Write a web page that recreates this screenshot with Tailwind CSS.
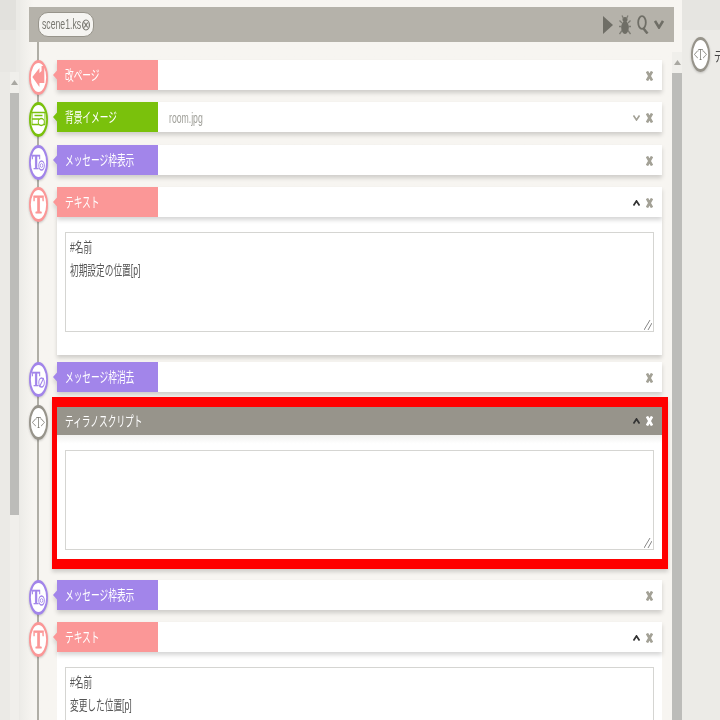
<!DOCTYPE html>
<html lang="ja">
<head>
    <meta charset="UTF-8">
    <title>scene1.ks</title>
    <script src="https://cdn.jsdelivr.net/npm/@tailwindcss/browser@4"></script>
</head>
<body class="flex h-[720px] w-[720px] overflow-hidden bg-[#ecebe7] font-['Liberation_Sans','Noto_Sans_CJK_JP',sans-serif] text-[14px]">

    <!-- left panel -->
    <div class="flex w-[20px] shrink-0 flex-col bg-[#ebeae6]">
        <div class="h-[30px] w-[16px] bg-[#e2e1dd]"></div>
        <div class="h-[42px] w-[16px] bg-[#e8e7e3]"></div>
        <div class="ml-[10px] flex h-[21px] w-[9px] items-center justify-center bg-[#f0efeb]">
            <svg width="7" height="5" viewBox="0 0 7 5"><path d="M3.5 0 7 5H0z" fill="#a9a8a2"/></svg>
        </div>
        <div class="ml-[10px] h-[422px] w-[9px] bg-[#bcbcb9]"></div>
        <div class="ml-[10px] h-[205px] w-[9px] bg-[#f0efeb]"></div>
    </div>

    <!-- main panel -->
    <div class="flex w-[662px] shrink-0 flex-col bg-linear-to-r from-[#edece8] to-[#f7f5f1] to-[2%] pt-[7px]">
        <!-- toolbar -->
        <div class="ml-[9px] mr-[8px] flex h-[35px] shrink-0 items-center bg-[#b5b2aa]">
            <div class="ml-[9px] flex h-[25px] w-[56px] items-center rounded-[10px] border border-[#97948b] bg-[#f5f4f1] pl-[3px] text-[#77766f]">
                <span class="inline-block w-[38px] origin-left scale-x-[0.62] whitespace-nowrap">scene1.ks</span>
                <svg class="ml-[2px]" width="8" height="12" viewBox="0 0 8 12"><ellipse cx="4" cy="6" rx="3.400" ry="5" fill="none" stroke="#77766f" stroke-width="1.200"/><path d="M2.300 3.500 5.700 8.500M5.700 3.500 2.300 8.500" stroke="#77766f" stroke-width="1.200"/></svg>
            </div>
            <div class="ml-auto mr-[10px] flex items-center gap-[6px]">
                <svg width="10" height="18" viewBox="0 0 10 18"><path d="M0 0 10 9 0 18z" fill="#6f6e66"/></svg>
                <svg width="12" height="20" viewBox="0 0 12 20" fill="#6f6e66"><ellipse cx="6" cy="12.500" rx="3.800" ry="6.500"/><circle cx="6" cy="4.500" r="2.500"/><path d="M3 .5 4.500 3.500M9 .5 7.500 3.500M.5 5.500 3 8M11.500 5.500 9 8M0 11.500H3M12 11.500H9M.5 19 3 15.500M11.500 19 9 15.500" stroke="#7c7b73" stroke-width="1.300" fill="none"/></svg>
                <svg width="12" height="19" viewBox="0 0 12 19" fill="none" stroke="#6f6e66"><ellipse cx="5" cy="7.500" rx="3.800" ry="6.300" stroke-width="1.800"/><path d="M6.500 13.500 10.500 18.500" stroke-width="2.500"/></svg>
                <svg class="ml-[-1px]" width="10" height="9" viewBox="0 0 10 9" fill="none" stroke="#6f6e66" stroke-width="2.600"><path d="M1 1 5 7.500 9 1"/></svg>
            </div>
        </div>

        <div class="flex min-h-0 flex-1">
            <!-- timeline -->
            <div class="relative w-[652px] shrink-0 overflow-hidden pt-[18px]">
                <div class="absolute bottom-0 left-[17px] top-0 w-[2px] bg-[#b0aea6]"></div>

                <!-- 改ページ -->
                <div class="relative mb-[7px] ml-[9px] flex items-start">
                    <svg class="mr-[5px] shrink-0 drop-shadow-[0_1px_1px_rgba(0,0,0,0.2)]" width="19" height="35" viewBox="0 0 31 35" preserveAspectRatio="none"><ellipse cx="15.500" cy="17.500" rx="14" ry="16" fill="#fff" stroke="#fb9797" stroke-width="3"/><path d="M5.500 17 17 8V13L20.500 11V6H25V23H17V27Z" fill="#fb9797"/></svg>
                    <div class="flex h-[30px] w-[609px] drop-shadow-[0_3px_2px_rgba(0,0,0,0.16)]">
                        <div class="flex h-[30px] w-[105px] items-center bg-[#fb9797] pl-[12px] text-white [clip-path:polygon(0_50%,4px_35%,4px_0,100%_0,100%_100%,4px_100%,4px_65%)]">
                            <span class="inline-block origin-left scale-x-[0.62] whitespace-nowrap">改ページ</span>
                        </div>
                        <div class="flex flex-1 items-center justify-end bg-white pr-[9px] pt-[2px]">
                            <svg width="7" height="10" viewBox="0 0 7 10" fill="none" stroke="#a3a196" stroke-width="2.600"><path d="M1 .5 6 9.500M6 .5 1 9.500"/></svg>
                        </div>
                    </div>
                </div>

                <!-- 背景イメージ -->
                <div class="relative mb-[8px] ml-[9px] flex items-start">
                    <svg class="mr-[5px] shrink-0 drop-shadow-[0_1px_1px_rgba(0,0,0,0.2)]" width="19" height="35" viewBox="0 0 31 35" preserveAspectRatio="none"><ellipse cx="15.500" cy="17.500" rx="14" ry="16" fill="#fff" stroke="#7ac10c" stroke-width="3"/><rect x="5" y="10.500" width="21" height="12" fill="none" stroke="#7ac10c" stroke-width="1.500"/><path d="M5 17H16V22M9 13.500H22" stroke="#7ac10c" stroke-width="1.500" fill="none"/><ellipse cx="20" cy="20" rx="5" ry="3.500" fill="#fff" stroke="#7ac10c" stroke-width="1.500"/></svg>
                    <div class="flex h-[30px] w-[609px] drop-shadow-[0_3px_2px_rgba(0,0,0,0.16)]">
                        <div class="flex h-[30px] w-[105px] items-center bg-[#7ac10c] pl-[12px] text-white [clip-path:polygon(0_50%,4px_35%,4px_0,100%_0,100%_100%,4px_100%,4px_65%)]">
                            <span class="inline-block origin-left scale-x-[0.62] whitespace-nowrap">背景イメージ</span>
                        </div>
                        <div class="flex flex-1 items-center bg-white pl-[11px] pr-[9px] pt-[2px]">
                            <span class="inline-block w-[32px] origin-left scale-x-[0.62] whitespace-nowrap text-[#a0a09a]">room.jpg</span>
                            <svg class="ml-auto mr-[6px]" width="7" height="6" viewBox="0 0 7 6" fill="none" stroke="#a3a196" stroke-width="1.600"><path d="M.5 .5 3.500 5 6.500 .5"/></svg>
                            <svg width="7" height="10" viewBox="0 0 7 10" fill="none" stroke="#a3a196" stroke-width="2.600"><path d="M1 .5 6 9.500M6 .5 1 9.500"/></svg>
                        </div>
                    </div>
                </div>

                <!-- メッセージ枠表示 -->
                <div class="relative mb-[7px] ml-[9px] flex items-start">
                    <svg class="mr-[5px] shrink-0 drop-shadow-[0_1px_1px_rgba(0,0,0,0.2)]" width="19" height="35" viewBox="0 0 31 35" preserveAspectRatio="none"><ellipse cx="15.500" cy="17.500" rx="14" ry="16" fill="#fff" stroke="#a285ea" stroke-width="3"/><text x="5" y="24" font-family="Liberation Serif" font-weight="700" font-size="20" fill="#a285ea" stroke="#a285ea" stroke-width=".6">T</text><circle cx="20.500" cy="20.500" r="4.500" fill="none" stroke="#a285ea" stroke-width="1.500"/><circle cx="20.500" cy="20.500" r="2" fill="none" stroke="#a285ea" stroke-width="1"/></svg>
                    <div class="flex h-[30px] w-[609px] drop-shadow-[0_3px_2px_rgba(0,0,0,0.16)]">
                        <div class="flex h-[30px] w-[105px] items-center bg-[#a285ea] pl-[12px] text-white [clip-path:polygon(0_50%,4px_35%,4px_0,100%_0,100%_100%,4px_100%,4px_65%)]">
                            <span class="inline-block origin-left scale-x-[0.62] whitespace-nowrap">メッセージ枠表示</span>
                        </div>
                        <div class="flex flex-1 items-center justify-end bg-white pr-[9px] pt-[2px]">
                            <svg width="7" height="10" viewBox="0 0 7 10" fill="none" stroke="#a3a196" stroke-width="2.600"><path d="M1 .5 6 9.500M6 .5 1 9.500"/></svg>
                        </div>
                    </div>
                </div>

                <!-- テキスト -->
                <div class="relative mb-[7px] ml-[9px] flex items-start">
                    <svg class="mr-[5px] shrink-0 drop-shadow-[0_1px_1px_rgba(0,0,0,0.2)]" width="19" height="35" viewBox="0 0 31 35" preserveAspectRatio="none"><ellipse cx="15.500" cy="17.500" rx="14" ry="16" fill="#fff" stroke="#fb9797" stroke-width="3"/><text x="15.500" y="26" text-anchor="middle" font-family="Liberation Serif" font-weight="700" font-size="25" fill="#fb9797" stroke="#fb9797" stroke-width=".8">T</text></svg>
                    <div class="w-[609px]">
                        <div class="relative flex h-[30px] drop-shadow-[0_3px_2px_rgba(0,0,0,0.16)]">
                            <div class="flex h-[30px] w-[105px] items-center bg-[#fb9797] pl-[12px] text-white [clip-path:polygon(0_50%,4px_35%,4px_0,100%_0,100%_100%,4px_100%,4px_65%)]">
                                <span class="inline-block origin-left scale-x-[0.62] whitespace-nowrap">テキスト</span>
                            </div>
                            <div class="flex flex-1 items-center justify-end gap-[6px] bg-white pr-[9px] pt-[2px]">
                                <svg width="7" height="6" viewBox="0 0 7 6" fill="none" stroke="#333" stroke-width="1.800"><path d="M.5 5.500 3.500 1 6.500 5.500"/></svg>
                                <svg width="7" height="10" viewBox="0 0 7 10" fill="none" stroke="#a3a196" stroke-width="2.600"><path d="M1 .5 6 9.500M6 .5 1 9.500"/></svg>
                            </div>
                        </div>
                        <div class="ml-[4px] h-[138px] bg-white px-[8px] pt-[15px] shadow-[0_3px_4px_rgba(0,0,0,0.16)]">
                            <div class="relative h-[100px] border border-[#d5d5d2] px-[4px] py-[3px] leading-[23px] text-[#555]">
                                <div class="origin-left scale-x-[0.62] whitespace-nowrap">#名前</div>
                                <div class="origin-left scale-x-[0.62] whitespace-nowrap">初期設定の位置[p]</div>
                                <svg class="absolute bottom-[1px] right-[1px]" width="8" height="10" viewBox="0 0 8 10" fill="none" stroke="#888" stroke-width="1"><path d="M0 10 6 0M4 10 8 3"/></svg>
                            </div>
                        </div>
                    </div>
                </div>

                <!-- メッセージ枠消去 -->
                <div class="relative ml-[9px] flex items-start">
                    <svg class="mr-[5px] shrink-0 drop-shadow-[0_1px_1px_rgba(0,0,0,0.2)]" width="19" height="35" viewBox="0 0 31 35" preserveAspectRatio="none"><ellipse cx="15.500" cy="17.500" rx="14" ry="16" fill="#fff" stroke="#a285ea" stroke-width="3"/><text x="5" y="24" font-family="Liberation Serif" font-weight="700" font-size="20" fill="#a285ea" stroke="#a285ea" stroke-width=".6">T</text><circle cx="20.500" cy="20.500" r="4.500" fill="none" stroke="#a285ea" stroke-width="1.500"/><path d="M17 25 24 16" stroke="#a285ea" stroke-width="1.500"/></svg>
                    <div class="flex h-[30px] w-[609px] drop-shadow-[0_3px_2px_rgba(0,0,0,0.16)]">
                        <div class="flex h-[30px] w-[105px] items-center bg-[#a285ea] pl-[12px] text-white [clip-path:polygon(0_50%,4px_35%,4px_0,100%_0,100%_100%,4px_100%,4px_65%)]">
                            <span class="inline-block origin-left scale-x-[0.62] whitespace-nowrap">メッセージ枠消去</span>
                        </div>
                        <div class="flex flex-1 items-center justify-end bg-white pr-[9px] pt-[2px]">
                            <svg width="7" height="10" viewBox="0 0 7 10" fill="none" stroke="#a3a196" stroke-width="2.600"><path d="M1 .5 6 9.500M6 .5 1 9.500"/></svg>
                        </div>
                    </div>
                </div>

                <!-- ティラノスクリプト (selected) -->
                <div class="relative mb-[11px] ml-[9px] flex items-start">
                    <svg class="mr-[4px] mt-[8px] shrink-0 drop-shadow-[0_1px_1px_rgba(0,0,0,0.2)]" width="19" height="35" viewBox="0 0 31 35" preserveAspectRatio="none"><ellipse cx="15.500" cy="17.500" rx="14" ry="16" fill="#fff" stroke="#97948b" stroke-width="3"/><text text-anchor="middle" font-family="Liberation Serif" font-size="16" fill="#77766f" transform="translate(15.500 22.500) scale(.78 1)">&lt;T&gt;</text></svg>
                    <div class="w-[616px] border-y-[10px] border-l-[5px] border-r-[6px] border-[#ff0000] bg-white shadow-[0_3px_4px_rgba(0,0,0,0.16)]">
                        <div class="flex h-[28px] items-center justify-between bg-[#97948b] pl-[8px] pr-[9px] text-white">
                            <span class="inline-block origin-left scale-x-[0.62] whitespace-nowrap">ティラノスクリプト</span>
                            <div class="flex items-center gap-[6px]">
                                <svg width="7" height="6" viewBox="0 0 7 6" fill="none" stroke="#333" stroke-width="1.800"><path d="M.5 5.500 3.500 1 6.500 5.500"/></svg>
                                <svg width="7" height="10" viewBox="0 0 7 10" fill="none" stroke="#fff" stroke-width="2.600"><path d="M1 .5 6 9.500M6 .5 1 9.500"/></svg>
                            </div>
                        </div>
                        <div class="h-[124px] bg-linear-to-b from-[#f1f1ef] to-white to-[7%] px-[8px] pt-[15px]">
                            <div class="relative h-[100px] border border-[#d5d5d2] bg-white">
                                <svg class="absolute bottom-[1px] right-[1px]" width="8" height="10" viewBox="0 0 8 10" fill="none" stroke="#888" stroke-width="1"><path d="M0 10 6 0M4 10 8 3"/></svg>
                            </div>
                        </div>
                    </div>
                </div>

                <!-- メッセージ枠表示 -->
                <div class="relative mb-[7px] ml-[9px] flex items-start">
                    <svg class="mr-[5px] shrink-0 drop-shadow-[0_1px_1px_rgba(0,0,0,0.2)]" width="19" height="35" viewBox="0 0 31 35" preserveAspectRatio="none"><ellipse cx="15.500" cy="17.500" rx="14" ry="16" fill="#fff" stroke="#a285ea" stroke-width="3"/><text x="5" y="24" font-family="Liberation Serif" font-weight="700" font-size="20" fill="#a285ea" stroke="#a285ea" stroke-width=".6">T</text><circle cx="20.500" cy="20.500" r="4.500" fill="none" stroke="#a285ea" stroke-width="1.500"/><circle cx="20.500" cy="20.500" r="2" fill="none" stroke="#a285ea" stroke-width="1"/></svg>
                    <div class="flex h-[30px] w-[609px] drop-shadow-[0_3px_2px_rgba(0,0,0,0.16)]">
                        <div class="flex h-[30px] w-[105px] items-center bg-[#a285ea] pl-[12px] text-white [clip-path:polygon(0_50%,4px_35%,4px_0,100%_0,100%_100%,4px_100%,4px_65%)]">
                            <span class="inline-block origin-left scale-x-[0.62] whitespace-nowrap">メッセージ枠表示</span>
                        </div>
                        <div class="flex flex-1 items-center justify-end bg-white pr-[9px] pt-[2px]">
                            <svg width="7" height="10" viewBox="0 0 7 10" fill="none" stroke="#a3a196" stroke-width="2.600"><path d="M1 .5 6 9.500M6 .5 1 9.500"/></svg>
                        </div>
                    </div>
                </div>

                <!-- テキスト -->
                <div class="relative ml-[9px] flex items-start">
                    <svg class="mr-[5px] shrink-0 drop-shadow-[0_1px_1px_rgba(0,0,0,0.2)]" width="19" height="35" viewBox="0 0 31 35" preserveAspectRatio="none"><ellipse cx="15.500" cy="17.500" rx="14" ry="16" fill="#fff" stroke="#fb9797" stroke-width="3"/><text x="15.500" y="26" text-anchor="middle" font-family="Liberation Serif" font-weight="700" font-size="25" fill="#fb9797" stroke="#fb9797" stroke-width=".8">T</text></svg>
                    <div class="w-[609px]">
                        <div class="relative flex h-[30px] drop-shadow-[0_3px_2px_rgba(0,0,0,0.16)]">
                            <div class="flex h-[30px] w-[105px] items-center bg-[#fb9797] pl-[12px] text-white [clip-path:polygon(0_50%,4px_35%,4px_0,100%_0,100%_100%,4px_100%,4px_65%)]">
                                <span class="inline-block origin-left scale-x-[0.62] whitespace-nowrap">テキスト</span>
                            </div>
                            <div class="flex flex-1 items-center justify-end gap-[6px] bg-white pr-[9px] pt-[2px]">
                                <svg width="7" height="6" viewBox="0 0 7 6" fill="none" stroke="#333" stroke-width="1.800"><path d="M.5 5.500 3.500 1 6.500 5.500"/></svg>
                                <svg width="7" height="10" viewBox="0 0 7 10" fill="none" stroke="#a3a196" stroke-width="2.600"><path d="M1 .5 6 9.500M6 .5 1 9.500"/></svg>
                            </div>
                        </div>
                        <div class="ml-[4px] h-[138px] bg-white px-[8px] pt-[15px]">
                            <div class="h-[100px] border border-[#d5d5d2] px-[4px] py-[3px] leading-[23px] text-[#555]">
                                <div class="origin-left scale-x-[0.62] whitespace-nowrap">#名前</div>
                                <div class="origin-left scale-x-[0.62] whitespace-nowrap">変更した位置[p]</div>
                            </div>
                        </div>
                    </div>
                </div>
            </div>

            <!-- main scrollbar -->
            <div class="mt-[10px] w-[10px] shrink-0">
                <div class="flex h-[21px] items-center justify-center bg-[#f0efeb]">
                    <svg width="7" height="5" viewBox="0 0 7 5"><path d="M3.500 0 7 5H0z" fill="#a9a8a2"/></svg>
                </div>
                <div class="h-[650px] bg-[#bcbcb9]"></div>
            </div>
        </div>
    </div>

    <!-- right panel -->
    <div class="flex w-[38px] shrink-0 flex-col">
        <div class="h-[30px] bg-[#e6e5e1]"></div>
        <div class="ml-[9px] mt-[7px] flex items-start">
            <svg class="shrink-0 drop-shadow-[0_1px_1px_rgba(0,0,0,0.2)]" width="19" height="35" viewBox="0 0 31 35" preserveAspectRatio="none"><ellipse cx="15.500" cy="17.500" rx="14" ry="16" fill="#fff" stroke="#97948b" stroke-width="3"/><text text-anchor="middle" font-family="Liberation Serif" font-size="16" fill="#77766f" transform="translate(15.500 22.500) scale(.78 1)">&lt;T&gt;</text></svg>
            <span class="ml-[4px] mt-[9px] inline-block origin-left scale-x-[0.62] whitespace-nowrap text-[#444]">テ</span>
        </div>
    </div>
</body>
</html>
